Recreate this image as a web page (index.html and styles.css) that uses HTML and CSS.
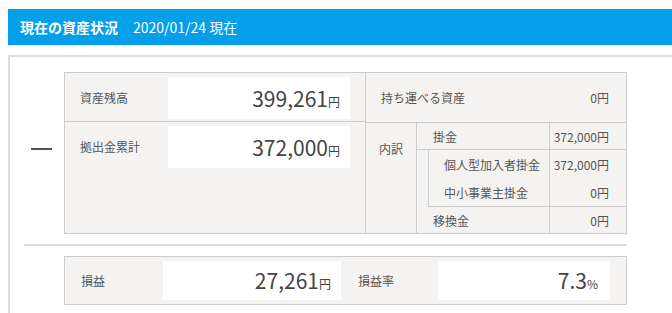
FILE: index.html
```html
<!DOCTYPE html>
<html lang="ja">
<head>
  <meta charset="UTF-8">
  <title>現在の資産状況</title>
  <link rel="stylesheet" href="styles.css">
</head>
<body>
  <div class="page">
    <!-- 見出し -->
    <div class="title-bar">
      <span class="title">現在の資産状況</span>
      <span class="date">2020/01/24 現在</span>
    </div>

    <div class="panel">
      <div class="summary">
        <div class="minus"><span class="dash"></span></div>

        <div class="asset-table">
          <!-- 左側 -->
          <div class="col-left">
            <div class="row row-top">
              <div class="label">資産残高</div>
              <div class="value-box">399,261<span class="unit">円</span></div>
            </div>
            <div class="row row-bottom">
              <div class="label">拠出金累計</div>
              <div class="value-box">372,000<span class="unit">円</span></div>
            </div>
          </div>

          <!-- 右側 -->
          <div class="col-right">
            <div class="row row-top portable">
              <span>持ち運べる資産</span>
              <span>0円</span>
            </div>
            <div class="row row-bottom breakdown">
              <div class="bd-head">内訳</div>
              <div class="bd-body">
                <div class="bd-row">
                  <div class="bd-name">掛金</div>
                  <div class="bd-val">372,000円</div>
                </div>
                <div class="bd-sub">
                  <div class="bd-row">
                    <div class="bd-name">個人型加入者掛金</div>
                    <div class="bd-val">372,000円</div>
                  </div>
                  <div class="bd-row">
                    <div class="bd-name">中小事業主掛金</div>
                    <div class="bd-val">0円</div>
                  </div>
                </div>
                <div class="bd-row bd-last">
                  <div class="bd-name">移換金</div>
                  <div class="bd-val">0円</div>
                </div>
              </div>
            </div>
          </div>
        </div>
      </div>

      <hr class="sep">

      <!-- 損益 -->
      <div class="profit">
        <div class="label">損益</div>
        <div class="value-box profit-box">27,261<span class="unit">円</span></div>
        <div class="label rate-label">損益率</div>
        <div class="value-box rate-box">7.3<span class="unit">%</span></div>
      </div>
    </div>
  </div>
</body>
</html>
```

FILE: styles.css
```css
body {
  margin: 0;
  padding: 9px 0 0 8px;
  overflow: hidden;
  font-family: "Noto Sans CJK JP", "Noto Sans", sans-serif;
  color: #555;
  background: #fff;
}
.page {
  width: 664px;
}
.title-bar {
  background: #039fea;
  color: #fff;
  height: 36px;
  display: flex;
  align-items: center;
  padding-left: 12px;
  font-size: 14px;
}
.title {
  font-weight: bold;
  margin-right: 15px;
}
.panel {
  margin-top: 10px;
  border: 2px solid #ddd;
  border-right: none;
  border-bottom: none;
  padding: 15px 0 9px 0;
}
.summary {
  display: flex;
}
.minus {
  width: 54px;
  padding-top: 76px;
}
.dash {
  display: block;
  margin-left: 21px;
  width: 21px;
  height: 2px;
  background: #555;
}
.asset-table {
  display: flex;
  width: 561px;
  border: 1px solid #ccc;
  background: #f4f3f2;
}
.col-left {
  width: 300px;
  border-right: 1px solid #ccc;
}
.col-right {
  flex: 1;
}
.row-top {
  height: 49px;
  border-bottom: 1px solid #ccc;
}
.row-bottom {
  height: 110px;
}
.col-left .row {
  display: flex;
  padding-top: 4px;
  box-sizing: border-box;
}
.label {
  font-size: 12px;
  width: 88px;
  padding-left: 15px;
  height: 42px;
  line-height: 42px;
}
.value-box {
  background: #fff;
  width: 182px;
  height: 42px;
  box-sizing: border-box;
  padding-right: 10px;
  text-align: right;
  font-size: 21px;
  line-height: 42px;
  color: #444;
}
.unit {
  font-size: 12px;
}
.portable {
  display: flex;
  justify-content: space-between;
  align-items: center;
  padding: 0 17px 0 15px;
  font-size: 12px;
}
.breakdown {
  display: flex;
  font-size: 12px;
}
.bd-head {
  width: 50px;
  border-right: 1px solid #ccc;
  text-align: center;
  padding-top: 17px;
}
.bd-body {
  flex: 1;
  display: flex;
  flex-direction: column;
}
.bd-row {
  display: flex;
  height: 28px;
  align-items: center;
  border-bottom: 1px solid #ccc;
}
.bd-last {
  border-bottom: none;
  height: 27px;
}
.bd-name {
  flex: 1;
  padding-left: 16px;
  height: 100%;
  display: flex;
  align-items: center;
}
.bd-val {
  width: 77px;
  padding-right: 17px;
  height: 100%;
  display: flex;
  align-items: center;
  justify-content: flex-end;
  border-left: 1px solid #ccc;
  box-sizing: border-box;
}
.bd-sub {
  margin-left: 11px;
  border-left: 1px solid #ccc;
  border-bottom: 1px solid #ccc;
}
.bd-sub .bd-row {
  border-bottom: none;
}
.bd-sub .bd-name {
  padding-left: 15px;
}
.sep {
  margin: 10px 0 10px 14px;
  width: 603px;
  border: none;
  height: 2px;
  background: #ddd;
}
.profit {
  display: flex;
  margin-left: 54px;
  width: 545px;
  border: 1px solid #ccc;
  background: #f4f3f2;
  padding: 4px 16px 4px 0;
}
.profit .label {
  width: 82px;
  padding-left: 16px;
  height: 39px;
  line-height: 39px;
}
.profit .value-box {
  height: 39px;
  line-height: 39px;
}
.profit-box {
  width: 179px;
}
.profit .rate-label {
  width: 80px;
  padding-left: 17px;
}
.rate-box {
  width: 173px;
  padding-right: 12px;
}
```
